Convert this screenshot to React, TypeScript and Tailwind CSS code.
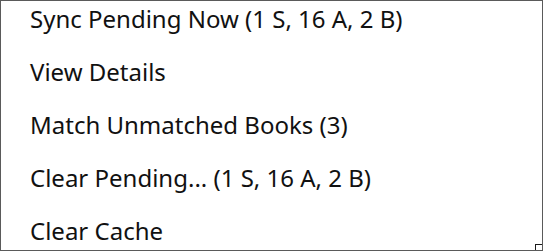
import React from 'react';

const items = [
  'Sync Pending Now (1 S, 16 A, 2 B)',
  'View Details',
  'Match Unmatched Books (3)',
  'Clear Pending... (1 S, 16 A, 2 B)',
  'Clear Cache',
];

export default function App() {
  return (
    <div className="relative h-[251px] w-[543px] overflow-hidden border border-[#5a5a5a] bg-white font-['Noto_Sans',sans-serif] text-[24px] text-[#111]">
      <ul className="-mt-[9px] flex flex-col">
        {items.map((label) => (
          <li key={label} className="flex h-[53px] items-center pl-[29px] leading-none">
            {label}
          </li>
        ))}
      </ul>
      {/* resize grip notch */}
      <div className="absolute bottom-[-1px] right-[-1px] h-[7px] w-[8px] border-l border-t border-[#1a1a1a] bg-white" />
    </div>
  );
}
